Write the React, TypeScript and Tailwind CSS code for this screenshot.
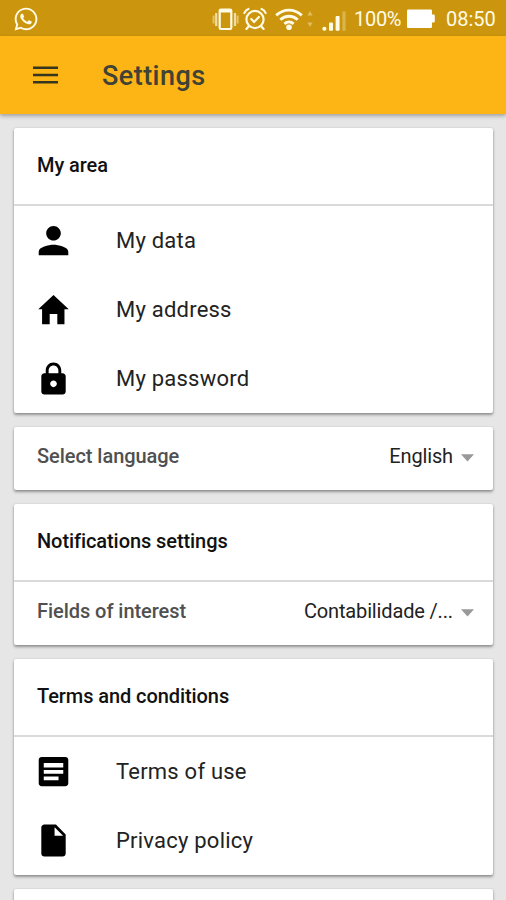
import React from 'react';
import { FaWhatsapp } from 'react-icons/fa';

function VibrateIcon() {
  return (
    <svg width="28" height="24" viewBox="0 0 28 24" fill="none" aria-hidden>
      <rect x="7.700" y="2.500" width="11.600" height="19.500" rx="1.200" stroke="#fffbe6" strokeWidth="2.200" />
      <path d="M8 4h11" stroke="#fffbe6" strokeWidth="3" />
      <path d="M4.200 6v13M23 6v13" stroke="#fffbe6" strokeOpacity="0.7" strokeWidth="2.200" />
      <path d="M1.600 8.500v8M25.600 8.500v8" stroke="#fffbe6" strokeOpacity="0.45" strokeWidth="2" />
    </svg>
  );
}

function AlarmIcon() {
  return (
    <svg width="24" height="24" viewBox="0 0 24 24" fill="none" stroke="#fffbe6" strokeWidth="2.200" strokeLinecap="round" aria-hidden>
      <circle cx="12" cy="12.500" r="8.600" />
      <path d="M8.300 12l2.800 3 4.800-5" />
      <path d="M1.400 6c.7-2 2-3.400 4-4M22.600 6c-.7-2-2-3.400-4-4M5.600 19.500l-2.200 2.400M18.400 19.500l2.200 2.400" />
    </svg>
  );
}

function WifiIcon() {
  return (
    <svg width="28" height="24" viewBox="0 0 28 24" fill="none" stroke="#fffbe6" strokeWidth="2.900" aria-hidden>
      <path d="M1.200 8.400c7.400-7 18.200-7 25.600 0" />
      <path d="M5.300 12.800c5-4.800 12.400-4.800 17.400 0" />
      <path d="M9.400 16.900c2.800-2.600 6.400-2.600 9.200 0" />
      <circle cx="14" cy="20.300" r="2.800" fill="#fffbe6" stroke="none" />
    </svg>
  );
}

function DataArrows() {
  return (
    <svg width="6" height="18" viewBox="0 0 6 18" fill="#fffbe6" fillOpacity="0.38" aria-hidden>
      <path d="M3 1l2.600 4.400H.4zM3 17l2.600-4.400H.4z" />
    </svg>
  );
}

function SignalIcon() {
  return (
    <svg width="25" height="20" viewBox="0 0 25 20" fill="#fffbe6" aria-hidden>
      <rect x="0.400" y="15.800" width="4" height="4" rx="1.800" />
      <rect x="7" y="11.500" width="4" height="8.300" rx="1" />
      <rect x="13.600" y="5" width="4" height="14.800" rx="1" />
      <rect x="20.400" y="0.500" width="3.200" height="19.300" fillOpacity="0.3" />
    </svg>
  );
}

function BatteryIcon() {
  return (
    <svg width="28" height="20" viewBox="0 0 28 20" fill="#fff" aria-hidden>
      <path d="M1.200 0.500h22.600q1.200 0 1.200 1.200v3.800h1.600q1.200 0 1.200 1.200v5.600q0 1.200-1.200 1.200H25v4.300q0 1.200-1.200 1.200H1.200Q0 19 0 17.800V1.700Q0 .5 1.200 .5z" />
    </svg>
  );
}

const ICONS = {
  person: 'M256 256c53 0 96-43 96-96s-43-96-96-96-96 43-96 96 43 96 96 96zm0 56c-64 0-194 28-194 92v44h388v-44c0-64-130-92-194-92z',
  home: 'M206 448V316h100v132h94V252H456L256 64 56 252h50v196z',
  lock: 'M376 186h-18v-36c0-58-45-104-102-104S154 92 154 150v36h-18c-22 0-40 18-40 40v200c0 22 18 40 40 40h240c22 0 40-18 40-40V226c0-22-18-40-40-40zM256 370c-24 0-44-20-44-44s20-44 44-44 44 20 44 44-20 44-44 44zm64-184H192v-36c0-36 28-66 64-66s64 30 64 66z',
  list: 'M412 64H100c-22 0-38 16-38 38v308c0 22 16 38 38 38h312c22 0 38-16 38-38V102c0-22-16-38-38-38zM322 370H128v-50h194zm62-84H128v-50h256zm0-84H128v-56h256z',
  file: 'M136 46c-22 0-40 18-40 40v340c0 22 18 40 40 40h240c22 0 40-18 40-40V176L288 46zm134 148V82l112 112z',
};

function Item({ icon, label }: { icon: keyof typeof ICONS; label: string }) {
  return (
    <button type="button" className="flex h-[69px] w-full items-center pl-5 text-left">
      <svg width="39" height="39" viewBox="0 0 512 512" fill="#000" fillRule="evenodd" aria-hidden>
        <path d={ICONS[icon]} />
      </svg>
      <span className="ml-[43px] text-[22px] tracking-[0.22px] text-[#222]">{label}</span>
    </button>
  );
}

function SelectRow({ label, value }: { label: string; value: string }) {
  return (
    <button type="button" className="flex h-[63px] w-full items-center pr-[19px] pb-[5px] pl-[23px] text-left text-[20px]">
      <span className="flex-1 font-medium tracking-[-0.05px] text-[#505050]">{label}</span>
      <span className="tracking-[-0.15px] text-[#222]">{value}</span>
      <svg className="mt-1 ml-2" width="13" height="8" viewBox="0 0 13 8" fill="#999" aria-hidden>
        <path d="M0 .3h13L6.500 7.500z" />
      </svg>
    </button>
  );
}

function Card({ title, children }: { title?: string; children?: React.ReactNode }) {
  return (
    <section className="shrink-0 rounded-[2px] bg-white shadow-[0_2px_3px_rgba(0,0,0,0.36),0_0_2px_rgba(0,0,0,0.14)]">
      {title && (
        <h2 className="flex h-[78px] items-center border-b-2 border-[#dadada] pb-0.5 pl-[23px] text-[20px] font-medium tracking-[-0.08px] text-[#111]">
          {title}
        </h2>
      )}
      {children}
    </section>
  );
}

export default function App() {
  return (
    <div className="flex h-[900px] w-[506px] flex-col overflow-hidden bg-[#e6e6e6] font-['Roboto',sans-serif]">
      <div className="flex h-9 shrink-0 items-center bg-[#cb960d] pt-px pl-[13px] text-[20px] text-[#fffbe6]">
        <FaWhatsapp className="size-[26px]" />
        <div className="ml-[173px] flex items-center">
          <VibrateIcon />
          <span className="ml-[3px]"><AlarmIcon /></span>
          <span className="ml-[8px]"><WifiIcon /></span>
          <span className="ml-[4px]"><DataArrows /></span>
          <span className="mt-1 ml-[9px]"><SignalIcon /></span>
        </div>
        <span className="ml-[7px] w-[49px] whitespace-nowrap tracking-[-0.3px]">100%</span>
        <span className="ml-1"><BatteryIcon /></span>
        <span className="ml-[11px]">08:50</span>
      </div>

      <header className="relative flex h-[78px] shrink-0 items-center bg-[#fdb415] pl-[33px] shadow-[0_2px_4px_rgba(0,0,0,0.3)]">
        <button type="button" aria-label="Menu">
          <svg width="25" height="18" viewBox="0 0 25 18" fill="#35361f" aria-hidden>
            <path d="M0 0.500h25v2.500H0zM0 7.700h25v2.500H0zM0 15h25v2.500H0z" />
          </svg>
        </button>
        <h1 className="mt-0.5 ml-11 text-[27px] font-medium tracking-[0.45px] text-[#3f4235]">Settings</h1>
      </header>

      <main className="flex min-h-0 flex-1 flex-col gap-3.5 pt-3.5 pr-[13px] pl-3.5">
        <Card title="My area">
          <Item icon="person" label="My data" />
          <Item icon="home" label="My address" />
          <Item icon="lock" label="My password" />
        </Card>
        <Card>
          <SelectRow label="Select language" value="English" />
        </Card>
        <Card title="Notifications settings">
          <SelectRow label="Fields of interest" value="Contabilidade /..." />
        </Card>
        <Card title="Terms and conditions">
          <Item icon="list" label="Terms of use" />
          <Item icon="file" label="Privacy policy" />
        </Card>
        <Card>
          <div className="h-16" />
        </Card>
      </main>
    </div>
  );
}
